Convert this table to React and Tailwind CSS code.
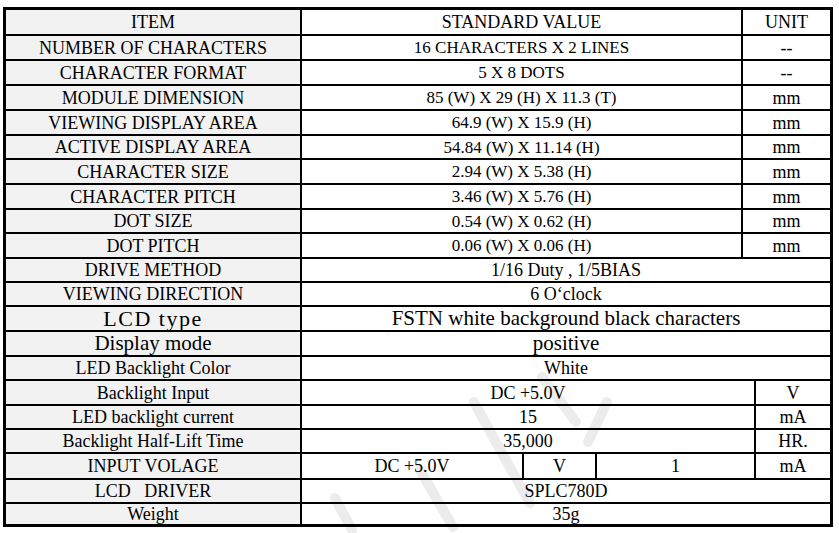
import React from "react";

const GRAY = "bg-[#f2f2f2]";

function Cell({ className = "", children }) {
  return (
    <div className={"flex items-center justify-center whitespace-pre " + className}>
      {children}
    </div>
  );
}

const top = [
  ["NUMBER OF CHARACTERS", "16 CHARACTERS X 2 LINES", "--", "h-[25px]"],
  ["CHARACTER FORMAT", "5 X 8 DOTS", "--", "h-[25px]"],
  ["MODULE DIMENSION", "85 (W) X 29 (H) X 11.3 (T)", "mm", "h-[25px]"],
  ["VIEWING DISPLAY AREA", "64.9 (W) X 15.9 (H)", "mm", "h-[25px]"],
  ["ACTIVE DISPLAY AREA", "54.84 (W) X 11.14 (H)", "mm", "h-[24px]"],
  ["CHARACTER SIZE", "2.94 (W) X 5.38 (H)", "mm", "h-[25px]"],
  ["CHARACTER PITCH", "3.46 (W) X 5.76 (H)", "mm", "h-[25px]"],
  ["DOT SIZE", "0.54 (W) X 0.62 (H)", "mm", "h-[24px]"],
  ["DOT PITCH", "0.06 (W) X 0.06 (H)", "mm", "h-[25px]"],
];

const spans = [
  ["DRIVE METHOD", "1/16 Duty , 1/5BIAS", "h-[24px]", "text-[18px]", ""],
  ["VIEWING DIRECTION", "6 O‘clock", "h-[24px]", "text-[18px]", ""],
  ["LCD type", "FSTN white background black characters", "h-[25px]", "text-[21px]", "text-[22px] tracking-[1.5px]"],
  ["Display mode", "positive", "h-[25px]", "text-[21px]", ""],
  ["LED Backlight Color", "White", "h-[24px]", "text-[18px]", ""],
];

const units2 = [
  ["Backlight Input", "DC +5.0V", "V", "h-[25px]"],
  ["LED backlight current", "15", "mA", "h-[24px]"],
  ["Backlight Half-Lift Time", "35,000", "HR.", "h-[24px]"],
];

function Watermark() {
  return (
    <svg className="absolute left-0 top-0 pointer-events-none" width="839" height="533" viewBox="0 0 839 533">
      <g fill="none" stroke="#ececec" strokeWidth="10" strokeLinecap="round" strokeLinejoin="round">
        <path d="M420 470 L453 527" />
        <path d="M474 402 Q500 450 530 503" />
        <path d="M607 402 L588 442" />
        <path d="M542 377 Q558 398 576 422" />
        <path d="M335 498 L352 530" />
      </g>
    </svg>
  );
}

export default function App() {
  return (
    <div className="relative w-[839px] h-[533px] bg-white font-['Liberation_Serif',serif] text-[18px] text-black leading-none">
      <Watermark />
      <div className="absolute left-0 top-0 pt-[7px] pl-[3px]">
        <div className="w-[830px] border-[3px] border-black flex flex-col">
          <div className="flex h-[24px]">
            <Cell className={"w-[294px] " + GRAY}>ITEM</Cell>
            <Cell className="w-[441px] border-l-2 border-black">STANDARD VALUE</Cell>
            <Cell className="w-[89px] border-l-2 border-black">UNIT</Cell>
          </div>
          {top.map(([a, b, c, h]) => (
            <div key={a} className={"flex border-t-2 border-black " + h}>
              <Cell className={"w-[294px] " + GRAY}>{a}</Cell>
              <Cell className="w-[441px] border-l-2 border-black text-[17px]">{b}</Cell>
              <Cell className="w-[89px] border-l-2 border-black">{c}</Cell>
            </div>
          ))}
          {spans.map(([a, b, h, t, tr]) => (
            <div key={a} className={"flex border-t-2 border-black " + h + " " + t}>
              <Cell className={"w-[294px] " + GRAY + " " + tr}>{a}</Cell>
              <Cell className="w-[530px] border-l-2 border-black">{b}</Cell>
            </div>
          ))}
          {units2.map(([a, b, c, h]) => (
            <div key={a} className={"flex border-t-2 border-black " + h}>
              <Cell className={"w-[294px] " + GRAY}>{a}</Cell>
              <Cell className="w-[454px] border-l-2 border-black">{b}</Cell>
              <Cell className="w-[76px] border-l-2 border-black">{c}</Cell>
            </div>
          ))}
          <div className="flex border-t-2 border-black h-[26px]">
            <Cell className={"w-[294px] " + GRAY}>INPUT VOLAGE</Cell>
            <Cell className="w-[222px] border-l-2 border-black">DC +5.0V</Cell>
            <Cell className="w-[73px] border-l-2 border-black">V</Cell>
            <Cell className="w-[159px] border-l-2 border-black">1</Cell>
            <Cell className="w-[76px] border-l-2 border-black">mA</Cell>
          </div>
          <div className="flex border-t-2 border-black h-[24px]">
            <Cell className={"w-[294px] " + GRAY}>LCD   DRIVER</Cell>
            <Cell className="w-[530px] border-l-2 border-black">SPLC780D</Cell>
          </div>
          <div className="flex border-t-2 border-black h-[22px]">
            <Cell className={"w-[294px] " + GRAY}>Weight</Cell>
            <Cell className="w-[530px] border-l-2 border-black">35g</Cell>
          </div>
        </div>
      </div>
    </div>
  );
}
